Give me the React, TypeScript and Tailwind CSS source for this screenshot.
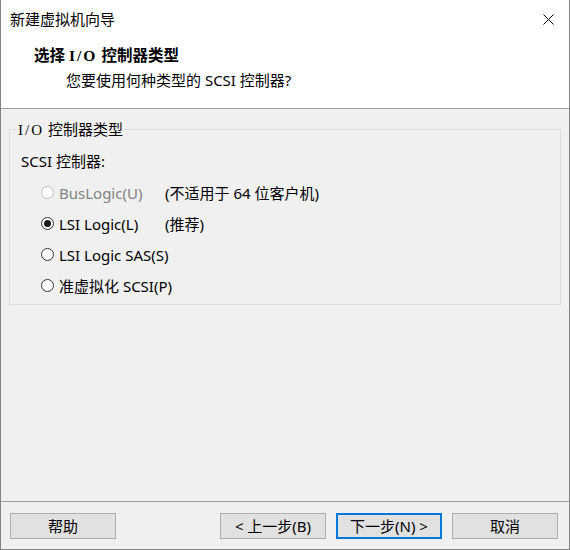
import React from "react";

const sans = "font-['Segoe_UI','Noto_Sans','Noto_Sans_CJK_SC',sans-serif]";

function Radio({ checked, disabled }: { checked?: boolean; disabled?: boolean }) {
  return (
    <span
      className={`flex h-[13px] w-[13px] shrink-0 items-center justify-center rounded-full border bg-white ${
        disabled ? "border-[#bcbcbc]" : "border-[#333333]"
      }`}
    >
      {checked && <span className="h-[7px] w-[7px] rounded-full bg-[#1a1a1a]" />}
    </span>
  );
}

function Row({
  label,
  note,
  checked,
  disabled,
}: {
  label: string;
  note?: string;
  checked?: boolean;
  disabled?: boolean;
}) {
  return (
    <div className="flex h-[31px] items-center pl-[24px]">
      <div className="flex w-[124px] shrink-0 items-center gap-[5px] whitespace-nowrap">
        <Radio checked={checked} disabled={disabled} />
        <span className={disabled ? "text-[#838383]" : "text-black"}>{label}</span>
      </div>
      {note && <span className="text-black">{note}</span>}
    </div>
  );
}

function Button({ children, primary }: { children: React.ReactNode; primary?: boolean }) {
  return (
    <button
      className={`flex h-[26px] w-[106px] items-center justify-center bg-[#e1e1e1] text-[15px] leading-none text-black ${
        primary ? "border-2 border-[#0078d7]" : "border border-[#adadad]"
      }`}
    >
      {children}
    </button>
  );
}

export default function App() {
  return (
    <div
      className={`flex h-[550px] w-[570px] flex-col border-x border-b border-[#838383] bg-[#f0f0f0] text-[15px] leading-[20px] text-black ${sans}`}
    >
      <div className="flex h-[109px] flex-col border-b border-[#a0a0a0] bg-white">
        <div className="flex items-center justify-between pl-[9px] pr-[15px] pt-[9px]">
          <span>新建虚拟机向导</span>
          <svg width="11" height="11" viewBox="0 0 11 11" className="mt-[1px]">
            <path d="M0.5 0.5 L10.5 10.5 M10.5 0.5 L0.5 10.5" stroke="#000" strokeWidth="1" fill="none" />
          </svg>
        </div>
        <div className="mt-[16px] pl-[33px] text-[15.5px] font-bold">
          选择 <span className="font-['Liberation_Serif',serif] tracking-[2px]">I/O</span> 控制器类型
        </div>
        <div className="mt-[4px] pl-[65px]">您要使用何种类型的 SCSI 控制器?</div>
      </div>

      <div className="flex-1 px-[8px] pt-[10px]">
        <fieldset className="h-[186px] border border-[#dcdcdc] pl-[7px]">
          <legend className="px-[1px]">
            <span className="font-['Liberation_Serif',serif] tracking-[2px]">I/O</span> 控制器类型
          </legend>
          <div className="mt-[11px] pl-[4px]">SCSI 控制器:</div>
          <div className="mt-[6px]">
            <Row label="BusLogic(U)" note="(不适用于 64 位客户机)" disabled />
            <Row label="LSI Logic(L)" note="(推荐)" checked />
            <Row label="LSI Logic SAS(S)" />
            <Row label="准虚拟化 SCSI(P)" />
          </div>
        </fieldset>
      </div>

      <div className="flex h-[48px] items-start justify-between border-t border-[#a0a0a0] pl-[9px] pr-[11px] pt-[11px]">
        <Button>帮助</Button>
        <div className="flex gap-[10px]">
          <Button>&lt; 上一步(B)</Button>
          <Button primary>下一步(N) &gt;</Button>
          <Button>取消</Button>
        </div>
      </div>
    </div>
  );
}
